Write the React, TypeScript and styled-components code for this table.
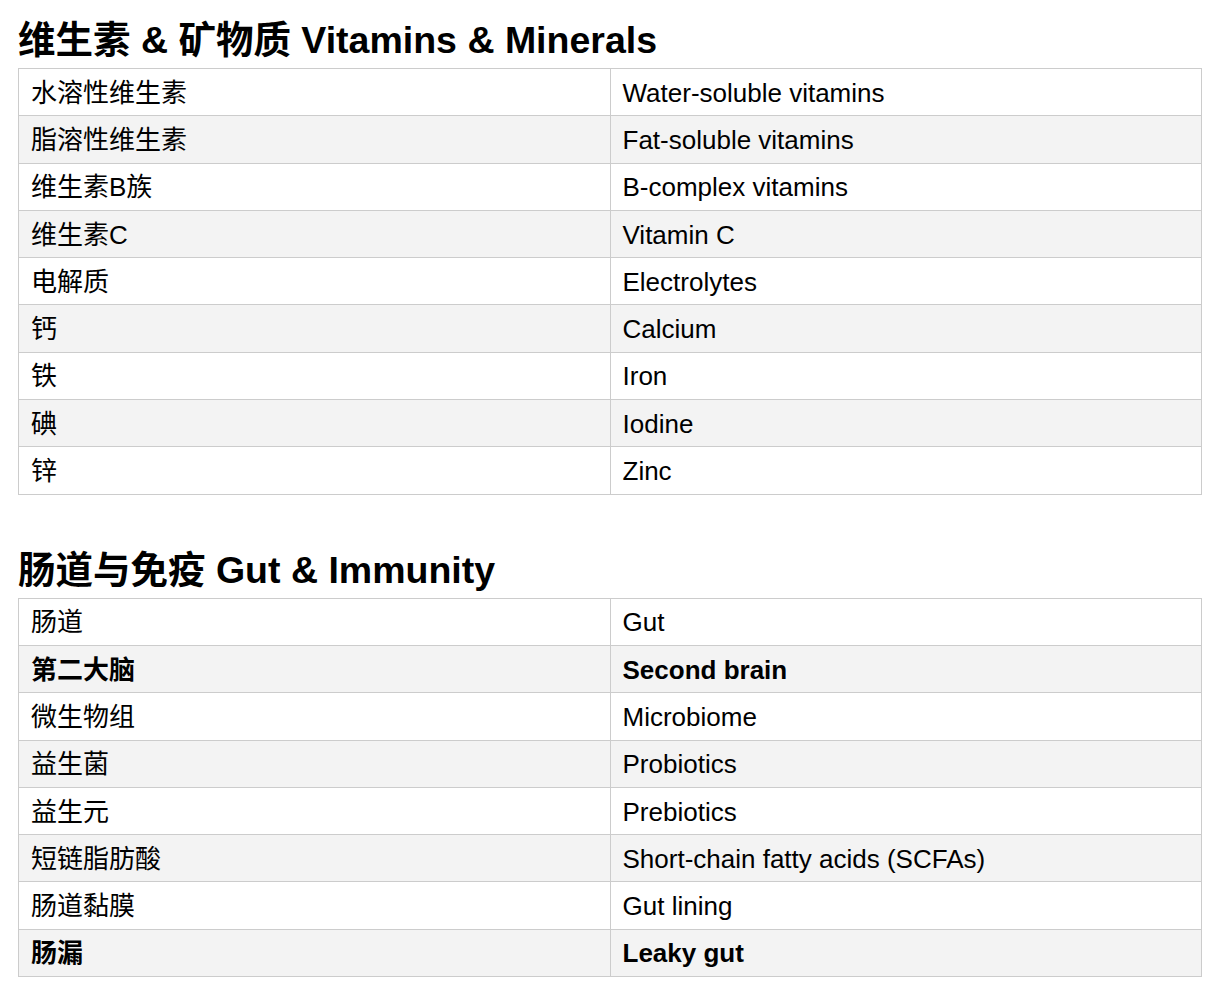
import { createGlobalStyle } from "styled-components";
import styled from "styled-components";

const GlobalStyle = createGlobalStyle`
  html, body {
    margin: 0;
    padding: 0;
    background: #fff;
  }
  body {
    font-family: "Liberation Sans", "Noto Sans CJK SC", sans-serif;
    color: #000;
  }
`;

const Page = styled.main`
  padding: 18px 30px 0 18px;
  display: flex;
  flex-direction: column;
`;

const Section = styled.section`
  display: flex;
  flex-direction: column;
  & + & {
    margin-top: 53px;
  }
`;

const Heading = styled.h2`
  margin: 0 0 6px;
  font-size: 37.5px;
  line-height: 44px;
  font-weight: 700;
`;

const Table = styled.table`
  width: 1184px;
  border-collapse: collapse;
  table-layout: fixed;
`;

const Row = styled.tr<{ $shaded: boolean }>`
  height: 47.3px;
  background: ${(p) => (p.$shaded ? "#f3f3f3" : "#fff")};
`;

const Cell = styled.td<{ $bold?: boolean }>`
  border: 1px solid #cccccc;
  padding: 1px 12px 0;
  font-size: 26px;
  line-height: 30px;
  font-weight: ${(p) => (p.$bold ? 700 : 400)};
  vertical-align: middle;
  white-space: nowrap;
`;

type Term = { zh: string; en: string; bold?: boolean };

const vitamins: Term[] = [
  { zh: "水溶性维生素", en: "Water-soluble vitamins" },
  { zh: "脂溶性维生素", en: "Fat-soluble vitamins" },
  { zh: "维生素B族", en: "B-complex vitamins" },
  { zh: "维生素C", en: "Vitamin C" },
  { zh: "电解质", en: "Electrolytes" },
  { zh: "钙", en: "Calcium" },
  { zh: "铁", en: "Iron" },
  { zh: "碘", en: "Iodine" },
  { zh: "锌", en: "Zinc" },
];

const gut: Term[] = [
  { zh: "肠道", en: "Gut" },
  { zh: "第二大脑", en: "Second brain", bold: true },
  { zh: "微生物组", en: "Microbiome" },
  { zh: "益生菌", en: "Probiotics" },
  { zh: "益生元", en: "Prebiotics" },
  { zh: "短链脂肪酸", en: "Short-chain fatty acids (SCFAs)" },
  { zh: "肠道黏膜", en: "Gut lining" },
  { zh: "肠漏", en: "Leaky gut", bold: true },
];

function TermTable({ title, terms }: { title: string; terms: Term[] }) {
  return (
    <Section>
      <Heading>{title}</Heading>
      <Table>
        <tbody>
          {terms.map((t, i) => (
            <Row key={t.en} $shaded={i % 2 === 1}>
              <Cell $bold={t.bold}>{t.zh}</Cell>
              <Cell $bold={t.bold}>{t.en}</Cell>
            </Row>
          ))}
        </tbody>
      </Table>
    </Section>
  );
}

export default function App() {
  return (
    <>
      <GlobalStyle />
      <Page>
        <TermTable title="维生素 & 矿物质 Vitamins & Minerals" terms={vitamins} />
        <TermTable title="肠道与免疫 Gut & Immunity" terms={gut} />
      </Page>
    </>
  );
}
